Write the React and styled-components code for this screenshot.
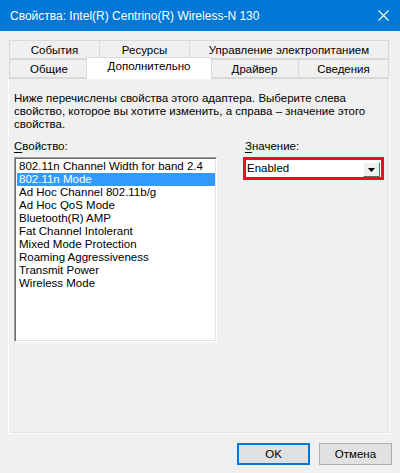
import styled, { createGlobalStyle } from "styled-components";

const GlobalStyle = createGlobalStyle`
  html, body {
    margin: 0;
    padding: 0;
    background: #f0f0f0;
  }
  * {
    box-sizing: border-box;
  }
`;

const backTabs = [
  { label: "События", width: 91 },
  { label: "Ресурсы", width: 91 },
  { label: "Управление электропитанием", width: 200 },
];

const frontTabs = [
  { label: "Общие", width: 80 },
  { label: "Дополнительно", width: 126, active: true },
  { label: "Драйвер", width: 89 },
  { label: "Сведения", width: 91 },
];

const properties = [
  "802.11n Channel Width for band 2.4",
  "802.11n Mode",
  "Ad Hoc Channel 802.11b/g",
  "Ad Hoc QoS Mode",
  "Bluetooth(R) AMP",
  "Fat Channel Intolerant",
  "Mixed Mode Protection",
  "Roaming Aggressiveness",
  "Transmit Power",
  "Wireless Mode",
];

function App() {
  return (
    <Window>
      <GlobalStyle />
      <TitleBar>
        <Title>Свойства: Intel(R) Centrino(R) Wireless-N 130</Title>
        <CloseButton>
          <svg width="11" height="11" viewBox="0 0 11 11">
            <path d="M0.5 0.5 L10.5 10.5 M10.5 0.5 L0.5 10.5" stroke="#fff" strokeWidth="1.1" />
          </svg>
        </CloseButton>
      </TitleBar>

      <Body>
        <TabStrip>
          <TabRow>
            {backTabs.map((t) => (
              <Tab key={t.label} $width={t.width}>
                {t.label}
              </Tab>
            ))}
          </TabRow>
          <TabRow>
            {frontTabs.map((t) => (
              <Tab key={t.label} $width={t.width} $active={t.active}>
                {t.label}
              </Tab>
            ))}
          </TabRow>
        </TabStrip>

        <Panel>
          <Description>
            Ниже перечислены свойства этого адаптера. Выберите слева
            <br />
            свойство, которое вы хотите изменить, а справа – значение этого
            <br />
            свойства.
          </Description>

          <Columns>
            <PropertyColumn>
              <FieldLabel>
                <u>С</u>войство:
              </FieldLabel>
              <ListBox>
                {properties.map((p, i) => (
                  <ListItem key={p} $selected={i === 1}>
                    {p}
                  </ListItem>
                ))}
              </ListBox>
            </PropertyColumn>

            <ValueColumn>
              <FieldLabel>
                <u>З</u>начение:
              </FieldLabel>
              <Highlight>
                <Combo>
                  <ComboText>Enabled</ComboText>
                  <DropButton>
                    <svg width="7" height="4" viewBox="0 0 7 4">
                      <path d="M0 0 H7 L3.5 4 Z" fill="#000" />
                    </svg>
                  </DropButton>
                </Combo>
              </Highlight>
            </ValueColumn>
          </Columns>
        </Panel>

        <ButtonRow>
          <DialogButton $primary>OK</DialogButton>
          <DialogButton>Отмена</DialogButton>
        </ButtonRow>
      </Body>
    </Window>
  );
}

const Window = styled.div`
  width: 400px;
  height: 473px;
  background: #f0f0f0;
  font-family: "Liberation Sans", Arial, sans-serif;
  font-size: 11.5px;
  color: #000;
  display: flex;
  flex-direction: column;
  overflow: hidden;
`;

const TitleBar = styled.div`
  height: 31px;
  background: #0078d7;
  display: flex;
  align-items: center;
  justify-content: space-between;
  padding-left: 10px;
`;

const Title = styled.div`
  color: #fff;
  font-size: 12px;
`;

const CloseButton = styled.div`
  width: 34px;
  height: 31px;
  display: flex;
  align-items: center;
  justify-content: center;
`;

const Body = styled.div`
  flex: 1;
  display: flex;
  flex-direction: column;
  padding: 9px 8px 0 8px;
`;

const TabStrip = styled.div`
  display: flex;
  flex-direction: column;
  padding-left: 1px;
`;

const TabRow = styled.div`
  display: flex;
  height: 19px;
`;

const Tab = styled.div`
  flex: none;
  width: ${(p) => p.$width}px;
  height: ${(p) => (p.$active ? 22 : 19)}px;
  margin: ${(p) => (p.$active ? "-2px -2px 0 -2px" : "0 -1px 0 0")};
  padding-top: ${(p) => (p.$active ? 2 : 3)}px;
  background: ${(p) => (p.$active ? "#fff" : "#f0f0f0")};
  border: 1px solid #d9d9d9;
  border-bottom: ${(p) => (p.$active ? "none" : "1px solid #d9d9d9")};
  position: relative;
  z-index: ${(p) => (p.$active ? 2 : 1)};
  text-align: center;
  white-space: nowrap;
  &:last-child {
    margin-right: 0;
  }
`;

const Panel = styled.div`
  height: 356px;
  width: 382px;
  border: 1px solid #fff;
  border-top-color: #d9d9d9;
  box-shadow: inset 1px 1px 0 #f0f0f0, inset -1px -1px 0 #e3e3e3;
  padding: 13px 5px 0 5px;
  display: flex;
  flex-direction: column;
`;

const Description = styled.div`
  line-height: 13px;
  white-space: nowrap;
`;

const Columns = styled.div`
  display: flex;
  margin-top: 9px;
`;

const PropertyColumn = styled.div`
  width: 206px;
  display: flex;
  flex-direction: column;
`;

const ValueColumn = styled.div`
  margin-left: 28px;
  width: 139px;
  display: flex;
  flex-direction: column;
`;

const FieldLabel = styled.div`
  line-height: 13px;
  height: 17px;
  u {
    text-decoration-thickness: 1px;
    text-underline-offset: 2px;
  }
`;

const ListBox = styled.div`
  height: 185px;
  background: #fff;
  border-top: 1px solid #a0a0a0;
  border-left: 1px solid #a0a0a0;
  border-right: 1px solid #fff;
  border-bottom: 1px solid #fff;
  box-shadow: inset 1px 1px 0 #696969, inset -1px -1px 0 #e3e3e3;
  padding: 2px 1px 0 2px;
`;

const ListItem = styled.div`
  height: 13px;
  line-height: 13px;
  padding-left: 2px;
  white-space: nowrap;
  background: ${(p) => (p.$selected ? "#3399ff" : "transparent")};
  color: ${(p) => (p.$selected ? "#fff" : "#000")};
`;

const Highlight = styled.div`
  margin-left: -2px;
  width: 141px;
  height: 23px;
  border: 3px solid #e81123;
  background: #fff;
`;

const Combo = styled.div`
  height: 17px;
  display: flex;
  align-items: center;
  justify-content: space-between;
`;

const ComboText = styled.div`
  padding-left: 1px;
  line-height: 17px;
`;

const DropButton = styled.div`
  width: 17px;
  height: 15px;
  margin-top: 2px;
  margin-right: 1px;
  background: #f0f0f0;
  border-top: 1px solid #fff;
  border-left: 1px solid #fff;
  border-right: 1px solid #696969;
  border-bottom: 1px solid #696969;
  display: flex;
  align-items: center;
  justify-content: center;
`;

const ButtonRow = styled.div`
  display: flex;
  justify-content: flex-end;
  gap: 9px;
  margin-top: 9px;
`;

const DialogButton = styled.button`
  width: 73px;
  height: 22px;
  font-family: inherit;
  font-size: 11.5px;
  background: #e1e1e1;
  border: ${(p) => (p.$primary ? "2px solid #0078d7" : "1px solid #adadad")};
  color: #000;
  padding: 0;
`;

export default App;
